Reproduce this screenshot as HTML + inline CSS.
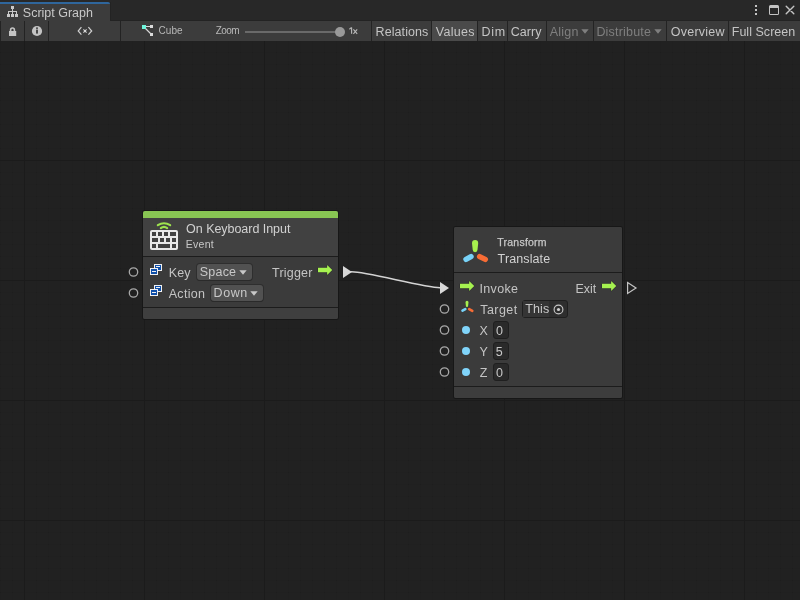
<!DOCTYPE html>
<html><head><meta charset="utf-8">
<style>
*{margin:0;padding:0;box-sizing:border-box}
html,body{width:800px;height:600px;overflow:hidden;background:#202020;font-family:"Liberation Sans",sans-serif;color:#c4c4c4}
#root{position:absolute;left:0;top:0;width:800px;height:600px;overflow:hidden;will-change:transform}
.a{position:absolute}
.tx{position:absolute;white-space:nowrap;line-height:14px}
.bl{display:inline-block;width:0;height:0;vertical-align:baseline}
#grid{position:absolute;left:0;top:41px;width:800px;height:559px;
 background-color:#212121;
 background-image:
  linear-gradient(to right,#1b1b1b 1px,transparent 1px),
  linear-gradient(to bottom,#1b1b1b 1px,transparent 1px),
  linear-gradient(to right,rgba(0,0,0,0.045) 1px,transparent 1px),
  linear-gradient(to bottom,rgba(0,0,0,0.045) 1px,transparent 1px);
 background-size:120px 120px,120px 120px,12px 12px,12px 12px;
 background-position:24px -1px,24px -1px,0 -1px,0 -1px;}
.sep{position:absolute;top:21px;width:1px;height:20px;background:#232323}
.tri{position:absolute;width:0;height:0;border-left:3.5px solid transparent;border-right:3.5px solid transparent;border-top:4px solid #7f7f7f}
.port{position:absolute;width:10px;height:10px;border:1px solid #a0a0a0;border-radius:50%}
.dd{position:absolute;height:16px;background:#515151;border-radius:3px;box-shadow:0 1px 0 #2a2a2a, 0 0 0 1px #2e2e2e}
.fld{position:absolute;height:17px;background:#2a2a2a;border:1px solid #1f1f1f;border-radius:3px}
.dot{position:absolute;width:8px;height:8px;border-radius:50%;background:#80d4fa}
.hl{position:absolute;left:0;height:1px;background:#1c1c1c}
</style></head><body><div id="root">
<svg class="a" style="left:0;top:41px" width="800" height="559" shape-rendering="crispEdges">
 <defs>
  <pattern id="mn" width="12" height="12" patternUnits="userSpaceOnUse" x="0" y="11">
   <rect x="0" y="0" width="1" height="12" fill="rgba(0,0,0,0.045)"/>
   <rect x="1" y="0" width="11" height="1" fill="rgba(0,0,0,0.045)"/>
   <rect x="0" y="0" width="1" height="1" fill="rgba(0,0,0,0.075)"/>
  </pattern>
  <pattern id="mj" width="120" height="120" patternUnits="userSpaceOnUse" x="24" y="119">
   <rect x="0" y="0" width="1" height="120" fill="#1b1b1b"/>
   <rect x="0" y="0" width="120" height="1" fill="#1b1b1b"/>
  </pattern>
 </defs>
 <rect width="800" height="559" fill="#212121"/>
 <rect width="800" height="559" fill="url(#mn)"/>
 <rect width="800" height="559" fill="url(#mj)"/>
</svg>

<div class="a" style="left:0;top:0;width:800px;height:21px;background:#282828"></div>
<div class="a" style="left:110px;top:20px;width:690px;height:1px;background:#232323"></div>
<div class="a" style="left:110px;top:2px;width:1px;height:19px;background:#232323"></div>
<div class="a" style="left:0;top:2px;width:110px;height:19px;background:#3c3c3c;border-top:2px solid #2f669c;border-top-right-radius:2px"></div>
<svg class="a" style="left:7px;top:5px" width="12" height="13" viewBox="0 0 12 13">
 <g fill="#c8c8c8">
  <rect x="4" y="1" width="3" height="3"/><rect x="5" y="4" width="1" height="3"/><rect x="1" y="6" width="9" height="1"/>
  <rect x="1" y="6" width="1" height="3"/><rect x="5" y="6" width="1" height="3"/><rect x="9" y="6" width="1" height="3"/>
  <rect x="0" y="9" width="3" height="3"/><rect x="4" y="9" width="3" height="3"/><rect x="8" y="9" width="3" height="3"/>
 </g>
</svg>
<div class="tx " id="t_ScriptGraph" style="left:22.84px;top:5.66px;font-size:12.5px;letter-spacing:-0.007px;color:#c8c8c8;">Script Graph<span class="bl"></span></div>
<div class="a" style="left:755px;top:5px;width:2px;height:2px;background:#c4c4c4"></div>
<div class="a" style="left:755px;top:9px;width:2px;height:2px;background:#c4c4c4"></div>
<div class="a" style="left:755px;top:13px;width:2px;height:2px;background:#c4c4c4"></div>
<div class="a" style="left:769px;top:5px;width:10px;height:10px;border:1px solid #c4c4c4;border-top-width:3px;border-radius:1.5px"></div>
<svg class="a" style="left:785px;top:5px" width="10" height="10" viewBox="0 0 10 10"><path d="M1.2 1.2L8.8 8.8M8.8 1.2L1.2 8.8" stroke="#c4c4c4" stroke-width="1.4" stroke-linecap="round"/></svg>

<div class="a" style="left:0;top:21px;width:800px;height:20px;background:#3c3c3c"></div>
<div class="a" style="left:432px;top:21px;width:45px;height:20px;background:#4a4a4a"></div>
<div class="sep" style="left:0px"></div><div class="sep" style="left:24px"></div><div class="sep" style="left:48px"></div><div class="sep" style="left:120px"></div><div class="sep" style="left:371px"></div><div class="sep" style="left:431px"></div><div class="sep" style="left:477px"></div><div class="sep" style="left:507px"></div><div class="sep" style="left:546px"></div><div class="sep" style="left:593px"></div><div class="sep" style="left:666px"></div><div class="sep" style="left:728px"></div>
<svg class="a" style="left:0;top:0" width="200" height="41" viewBox="0 0 200 41">
 <path d="M10.6 31.2V29.9A1.9 1.9 0 0 1 14.4 29.9V31.2" fill="none" stroke="#c4c4c4" stroke-width="1.6"/>
 <rect x="9" y="31" width="7.2" height="5" fill="#c4c4c4"/>
 <circle cx="37" cy="31" r="5.1" fill="#c4c4c4"/>
 <rect x="36.1" y="27.4" width="1.8" height="1.5" fill="#3c3c3c"/>
 <rect x="36.1" y="29.6" width="1.8" height="4" fill="#3c3c3c"/>
 <path d="M81.4 27.2L78.2 31L81.4 34.6M88.4 27.2L91.7 31L88.4 34.6" fill="none" stroke="#cfcfcf" stroke-width="1.2"/>
 <path d="M83.4 29.3L86.6 32.7M86.6 29.3L83.4 32.7" fill="none" stroke="#cfcfcf" stroke-width="1.1"/>
 <rect x="84.1" y="30.1" width="1.8" height="1.8" fill="#dcdcdc"/>
 <path d="M145 26.5H151M144.5 27.5L151.5 34.5" stroke="#d8d8d8" stroke-width="1.2"/>
 <rect x="142" y="25" width="4" height="4" fill="#6ff5dc"/>
 <rect x="150" y="25" width="3" height="3" fill="#dcdcdc"/>
 <rect x="150" y="33" width="3" height="3" fill="#dcdcdc"/>
</svg>
<div class="tx " id="t_Cube" style="left:158.39px;top:24.25px;font-size:10px;letter-spacing:0.111px;color:#b8b8b8;">Cube<span class="bl"></span></div>
<div class="tx " id="t_Zoom" style="left:215.79px;top:24px;font-size:10px;letter-spacing:-0.569px;color:#b8b8b8;">Zoom<span class="bl"></span></div>
<div class="a" style="left:245px;top:31px;width:92px;height:2px;background:#6a6a6a"></div>
<div class="a" style="left:335px;top:27px;width:10px;height:10px;border-radius:50%;background:#999"></div>
<svg class="a" style="left:0;top:0" width="400" height="41"><path d="M351.6 27.4V33.8M349.4 29.2L351.6 27.4" fill="none" stroke="#b8b8b8" stroke-width="1.15"/><path d="M353.4 29.4L357.2 33.8M357.2 29.4L353.4 33.8" fill="none" stroke="#b8b8b8" stroke-width="1.1"/></svg>
<div class="tx " id="t_Relations" style="left:375.57px;top:24.71px;font-size:12.5px;letter-spacing:0.079px;color:#c4c4c4;">Relations<span class="bl"></span></div>
<div class="tx " id="t_Values" style="left:435.75px;top:24.71px;font-size:12.5px;letter-spacing:0.28px;color:#c4c4c4;">Values<span class="bl"></span></div>
<div class="tx " id="t_Dim" style="left:481.57px;top:24.71px;font-size:12.5px;letter-spacing:0.701px;color:#c4c4c4;">Dim<span class="bl"></span></div>
<div class="tx " id="t_Carry" style="left:510.8px;top:24.71px;font-size:12.5px;letter-spacing:0.035px;color:#c4c4c4;">Carry<span class="bl"></span></div>
<div class="tx " id="t_Align" style="left:549.72px;top:24.71px;font-size:12.5px;letter-spacing:0.232px;color:#7f7f7f;">Align<span class="bl"></span></div>
<svg class="a" style="left:581px;top:28.8px" width="8" height="5"><path d="M0.3 0.3H7.7L4 4.7Z" fill="#7f7f7f"/></svg>
<div class="tx " id="t_Distribute" style="left:596.4px;top:24.8px;font-size:12.5px;letter-spacing:0.198px;color:#7f7f7f;">Distribute<span class="bl"></span></div>
<svg class="a" style="left:654px;top:28.8px" width="8" height="5"><path d="M0.3 0.3H7.7L4 4.7Z" fill="#7f7f7f"/></svg>
<div class="tx " id="t_Overview" style="left:670.8px;top:24.8px;font-size:12.5px;letter-spacing:0.236px;color:#c4c4c4;">Overview<span class="bl"></span></div>
<div class="tx " id="t_FullScreen" style="left:731.72px;top:24.71px;font-size:12.5px;letter-spacing:0.034px;color:#c4c4c4;">Full Screen<span class="bl"></span></div>

<svg class="a" style="left:0;top:0" width="800" height="600">
 <path d="M350 271.8 H351.5 C367.5 271.8, 424 287.7, 440 287.7 H442" fill="none" stroke="#d4d4d4" stroke-width="1.6"/>
 <path d="M343 266L352 272L343 278Z" fill="#d8d8d8"/>
 <path d="M440 282L449 288L440 294Z" fill="#d8d8d8"/>
 <path d="M627.6 282.6L636 288L627.6 293.4Z" fill="none" stroke="#c4c4c4" stroke-width="1.2"/>
</svg>

<div class="a" style="left:143px;top:211px;width:195px;height:108px;background:#3b3b3b;border-radius:2px;overflow:hidden;box-shadow:0 0 0 1px #171717">
 <div class="a" style="left:0;top:0;width:195px;height:7px;background:#88c553"></div>
 <div class="a" style="left:0;top:7px;width:195px;height:38px;background:#414141"></div>
 <div class="hl" style="top:45px;width:195px"></div>
 <div class="hl" style="top:96px;width:195px"></div>
 <div class="a" style="left:0;top:97px;width:195px;height:11px;background:#3f3f3f"></div>
</div>
<svg class="a" style="left:150px;top:220px" width="28" height="30" viewBox="0 0 28 30">
 <path d="M7.8 5.2A11.6 11.6 0 0 1 20.2 5.2M10.8 8.1A5.2 5.2 0 0 1 17.2 8.1" fill="none" stroke="#9ee44e" stroke-width="2.1" stroke-linecap="round"/>
 <rect x="0" y="10" width="28" height="20" rx="2" fill="#e8e8e8"/>
 <g fill="#414141">
  <rect x="2" y="12" width="4" height="4"/><rect x="8" y="12" width="4" height="4"/><rect x="14" y="12" width="4" height="4"/><rect x="20" y="12" width="6" height="4"/>
  <rect x="2" y="18" width="6" height="4"/><rect x="10" y="18" width="4" height="4"/><rect x="16" y="18" width="4" height="4"/><rect x="22" y="18" width="4" height="4"/>
  <rect x="2" y="24" width="4" height="4"/><rect x="8" y="24" width="12" height="4"/><rect x="22" y="24" width="4" height="4"/>
 </g>
</svg>
<div class="tx " id="t_OnKeyboard" style="left:186.12px;top:222px;font-size:12.5px;letter-spacing:-0.041px;color:#d2d2d2;">On Keyboard Input<span class="bl"></span></div>
<div class="tx " id="t_Event" style="left:185.68px;top:236.91px;font-size:10.5px;letter-spacing:0.288px;color:#c8c8c8;">Event<span class="bl"></span></div>
<svg class="a" style="left:149px;top:263px" width="14" height="13" viewBox="0 0 14 13">
 <rect x="5" y="1" width="8" height="7" fill="#f2f2f2"/><rect x="6" y="2" width="6" height="5" fill="#1050aa"/><rect x="7" y="3" width="4" height="1" fill="#f2f2f2"/>
 <rect x="1" y="5" width="8" height="7" fill="#f2f2f2"/><rect x="2" y="6" width="6" height="5" fill="#1050aa"/><rect x="3" y="8" width="4" height="1" fill="#f2f2f2"/>
</svg>
<svg class="a" style="left:149px;top:284px" width="14" height="13" viewBox="0 0 14 13">
 <rect x="5" y="1" width="8" height="7" fill="#f2f2f2"/><rect x="6" y="2" width="6" height="5" fill="#1050aa"/><rect x="7" y="3" width="4" height="1" fill="#f2f2f2"/>
 <rect x="1" y="5" width="8" height="7" fill="#f2f2f2"/><rect x="2" y="6" width="6" height="5" fill="#1050aa"/><rect x="3" y="8" width="4" height="1" fill="#f2f2f2"/>
</svg>
<div class="tx " id="t_Key" style="left:168.82px;top:265.91px;font-size:12.5px;letter-spacing:0.068px;color:#c4c4c4;">Key<span class="bl"></span></div>
<div class="tx " id="t_Action" style="left:168.72px;top:286.91px;font-size:12.5px;letter-spacing:0.305px;color:#c4c4c4;">Action<span class="bl"></span></div>
<div class="dd" style="left:197px;top:264px;width:55px"></div>
<div class="tx " id="t_Space" style="left:199.68px;top:265px;font-size:12.5px;letter-spacing:0.239px;color:#c8c8c8;">Space<span class="bl"></span></div>
<svg class="a" style="left:239px;top:269.5px" width="8" height="5"><path d="M0.3 0.3H7.7L4 4.7Z" fill="#c8c8c8"/></svg>
<div class="dd" style="left:211px;top:285px;width:52px"></div>
<div class="tx " id="t_Down" style="left:213.57px;top:286px;font-size:12.5px;letter-spacing:0.547px;color:#c8c8c8;">Down<span class="bl"></span></div>
<svg class="a" style="left:250px;top:290.5px" width="8" height="5"><path d="M0.3 0.3H7.7L4 4.7Z" fill="#c8c8c8"/></svg>
<div class="tx " id="t_Trigger" style="left:272.04px;top:266px;font-size:12.5px;letter-spacing:0.205px;color:#c4c4c4;">Trigger<span class="bl"></span></div>
<svg class="a" style="left:316.75px;top:263.85px" width="17" height="13" viewBox="0 0 17 13"><path d="M1 3.85H10.15V1L15.25 6.02L10.15 11.05V8.2H1Z" fill="#a6f250" stroke="rgba(0,0,0,0.28)" stroke-width="1" paint-order="stroke"/></svg>

<div class="a" style="left:454px;top:227px;width:168px;height:171px;background:#3b3b3b;border-radius:2px;overflow:hidden;box-shadow:0 0 0 1px #171717">
 <div class="a" style="left:0;top:0;width:168px;height:45px;background:#3b3b3b"></div>
 <div class="hl" style="top:45px;width:168px"></div>
 <div class="hl" style="top:159px;width:168px"></div>
 <div class="a" style="left:0;top:160px;width:168px;height:11px;background:#3d3d3d"></div>
</div>
<svg class="a" style="left:0;top:0" width="800" height="600">
 <path d="M472 243.2A3.1 3.1 0 0 1 478.2 243.2L477.5 249.8A2.4 2.4 0 0 1 472.7 249.8Z" fill="#a6f04e"/>
 <path d="M466 259.3L471 256.6" stroke="#78d2f8" stroke-width="5.4" stroke-linecap="round"/>
 <path d="M479.6 256.6L485.3 259.4" stroke="#f76c35" stroke-width="5.4" stroke-linecap="round"/>
</svg>
<div class="tx " id="t_Transform" style="left:497.33px;top:235px;font-size:10.5px;letter-spacing:0.221px;color:#c8c8c8;-webkit-text-stroke:0.25px #c8c8c8;">Transform<span class="bl"></span></div>
<div class="tx " id="t_Translate" style="left:497.6px;top:251.91px;font-size:12.5px;letter-spacing:0.116px;color:#d2d2d2;">Translate<span class="bl"></span></div>
<svg class="a" style="left:458.75px;top:279.85px" width="17" height="13" viewBox="0 0 17 13"><path d="M1 3.85H10.15V1L15.25 6.02L10.15 11.05V8.2H1Z" fill="#a6f250" stroke="rgba(0,0,0,0.28)" stroke-width="1" paint-order="stroke"/></svg>
<div class="tx " id="t_Invoke" style="left:479.57px;top:282px;font-size:12.5px;letter-spacing:0.309px;color:#c4c4c4;">Invoke<span class="bl"></span></div>
<div class="tx " id="t_Exit" style="left:575.62px;top:281.71px;font-size:12.5px;letter-spacing:-0.077px;color:#c4c4c4;">Exit<span class="bl"></span></div>
<svg class="a" style="left:600.7px;top:280px" width="17" height="13" viewBox="0 0 17 13"><path d="M1 3.85H10.15V1L15.25 6.02L10.15 11.05V8.2H1Z" fill="#a6f250" stroke="rgba(0,0,0,0.28)" stroke-width="1" paint-order="stroke"/></svg>
<svg class="a" style="left:0;top:0" width="800" height="600" fill="none" stroke="#a8a8a8" stroke-width="1.3">
 <circle cx="133.5" cy="272" r="4.2"/><circle cx="133.5" cy="293" r="4.2"/>
 <circle cx="444.5" cy="309" r="4.2"/><circle cx="444.5" cy="330" r="4.2"/><circle cx="444.5" cy="351" r="4.2"/><circle cx="444.5" cy="372" r="4.2"/>
</svg>
<svg class="a" style="left:0;top:0" width="800" height="600">
 <path d="M465.5 302.2A1.5 1.5 0 0 1 468.5 302.2L468.1 306A1.1 1.1 0 0 1 465.9 306Z" fill="#a6f04e"/>
 <path d="M462.5 310.7L465.3 309.1" stroke="#78d2f8" stroke-width="2.6" stroke-linecap="round"/>
 <path d="M469.2 309.1L472.3 310.9" stroke="#f76c35" stroke-width="2.6" stroke-linecap="round"/>
</svg>
<div class="tx " id="t_Target" style="left:480.34px;top:302.61px;font-size:12.5px;letter-spacing:0.417px;color:#c4c4c4;">Target<span class="bl"></span></div>
<div class="fld" style="left:522px;top:300px;width:46px;height:18px;background:#2e2e2e">
 <div class="a" style="left:0;top:0;width:26px;height:16px;background:#353535"></div>
 <svg class="a" style="left:29.5px;top:2.5px" width="11" height="11" viewBox="0 0 11 11"><circle cx="5.5" cy="5.5" r="4.4" fill="none" stroke="#c8c8c8" stroke-width="1.1"/><circle cx="5.5" cy="5.5" r="1.6" fill="#d0d0d0"/></svg>
</div>
<div class="tx " id="t_This" style="left:525.35px;top:301.91px;font-size:12.5px;letter-spacing:0.067px;color:#c8c8c8;">This<span class="bl"></span></div>
<div class="dot" style="left:462px;top:326px"></div>
<div class="dot" style="left:462px;top:347px"></div>
<div class="dot" style="left:462px;top:368px"></div>
<div class="tx " id="t_X" style="left:479.45px;top:323.91px;font-size:12.5px;letter-spacing:0px;color:#c4c4c4;">X<span class="bl"></span></div>
<div class="tx " id="t_Y" style="left:479.54px;top:344.91px;font-size:12.5px;letter-spacing:0px;color:#c4c4c4;">Y<span class="bl"></span></div>
<div class="tx " id="t_Z" style="left:479.7px;top:365.91px;font-size:12.5px;letter-spacing:0px;color:#c4c4c4;">Z<span class="bl"></span></div>
<div class="fld" style="left:493px;top:321px;width:16px;height:18px"></div>
<div class="fld" style="left:493px;top:342px;width:16px;height:18px"></div>
<div class="fld" style="left:493px;top:363px;width:16px;height:18px"></div>
<div class="tx " id="t_X0" style="left:496.1px;top:323.91px;font-size:12.5px;letter-spacing:0px;color:#c8c8c8;">0<span class="bl"></span></div>
<div class="tx " id="t_Y5" style="left:495.81px;top:344.91px;font-size:12.5px;letter-spacing:0px;color:#c8c8c8;">5<span class="bl"></span></div>
<div class="tx " id="t_Z0" style="left:496.1px;top:365.91px;font-size:12.5px;letter-spacing:0px;color:#c8c8c8;">0<span class="bl"></span></div>
</div></body></html>
